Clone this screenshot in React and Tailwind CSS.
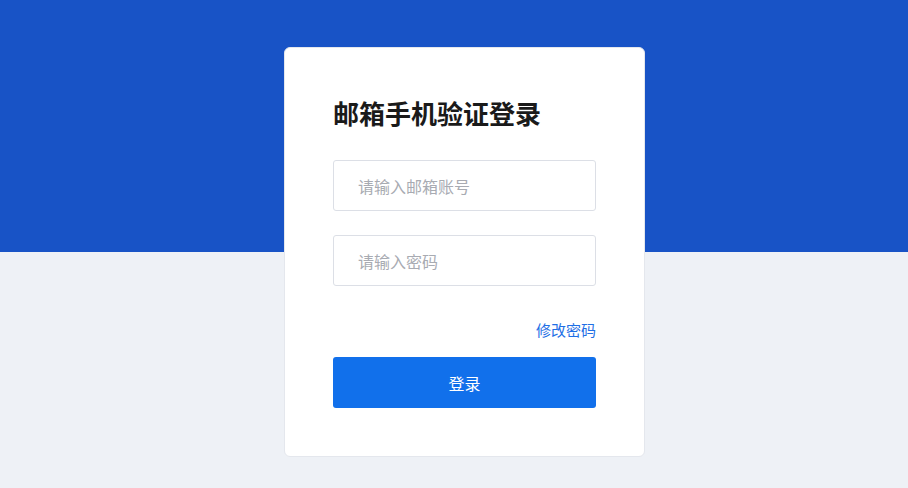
export default function App() {
  return (
    <div
      className="relative h-[488px] w-full overflow-hidden bg-[#eef1f6]"
      style={{ fontFamily: '"Noto Sans CJK SC", "Noto Sans", sans-serif' }}
    >
      {/* blue top band */}
      <div className="absolute inset-x-0 top-0 h-[252px] bg-[#1853c6]" />

      <div className="relative flex justify-center pt-[47px] pl-[21px]">
        <div className="flex w-[361px] flex-col rounded-md border border-[#e4e7ed] bg-white px-[48px] pt-[49px] pb-[48px]">
          <h1 className="text-[26px] font-bold leading-[32px] text-[#1a1a1a]">
            邮箱手机验证登录
          </h1>

          <input
            className="mt-[31px] h-[51px] w-full rounded-[3px] border border-[#dcdfe6] px-[24px] text-[16px] text-[#333] outline-none placeholder:text-[#a8abb2]"
            placeholder="请输入邮箱账号"
          />
          <input
            type="password"
            className="mt-[24px] h-[51px] w-full rounded-[3px] border border-[#dcdfe6] px-[24px] text-[16px] text-[#333] outline-none placeholder:text-[#a8abb2]"
            placeholder="请输入密码"
          />

          <div className="mt-[34px] flex justify-end">
            <a className="cursor-pointer text-[15px] leading-[20px] text-[#1f6fe5]">修改密码</a>
          </div>

          <button className="mt-[17px] h-[51px] w-full rounded-[3px] bg-[#1170eb] text-[16px] text-white">
            登录
          </button>
        </div>
      </div>
    </div>
  )
}
